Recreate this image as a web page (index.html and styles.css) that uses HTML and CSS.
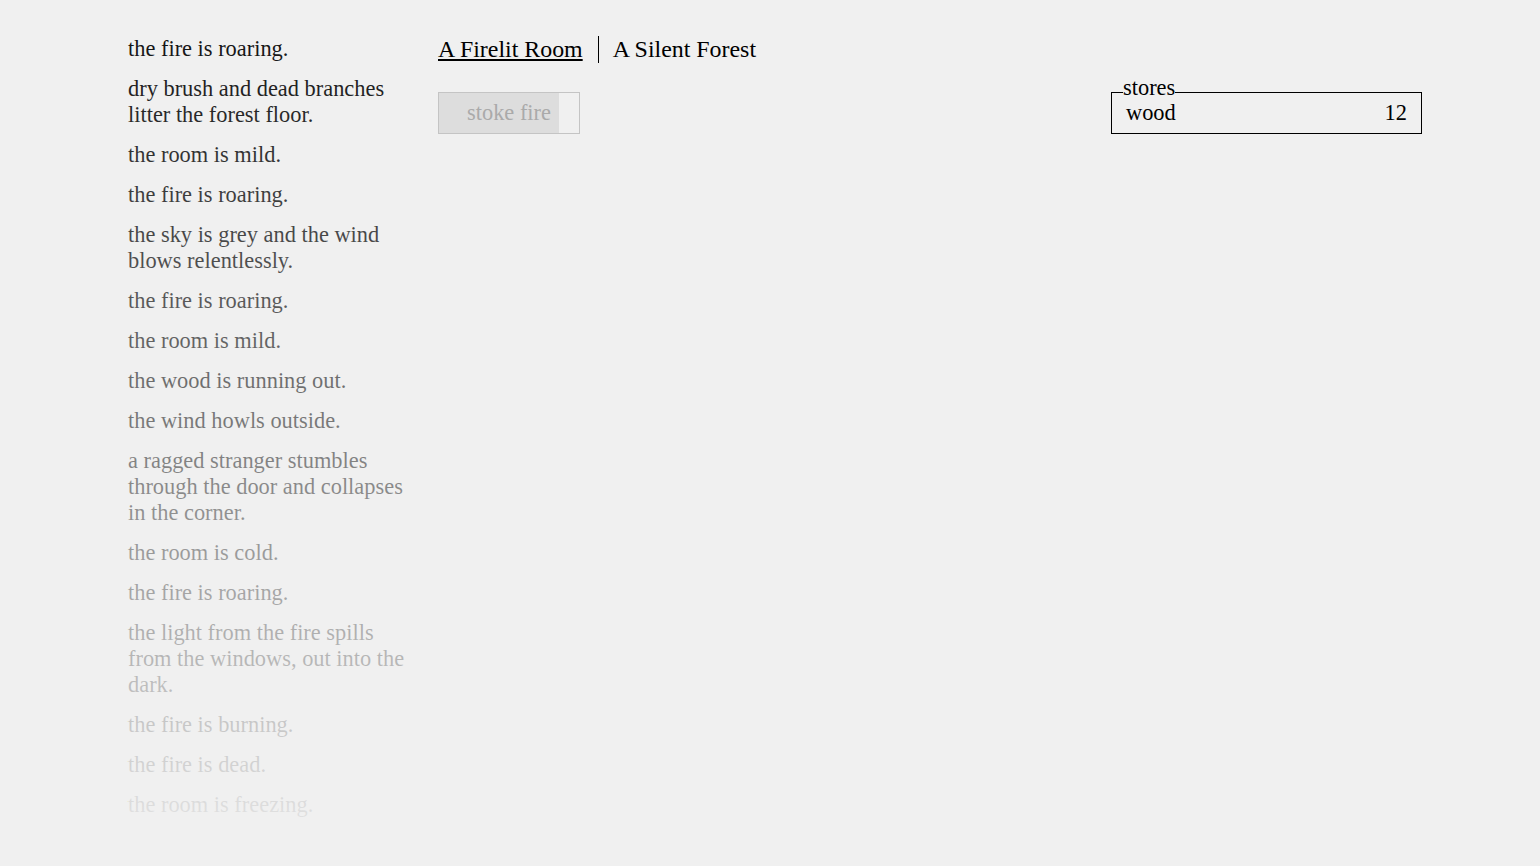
FILE: index.html
```html
<!DOCTYPE html>
<html lang="en">
<head>
    <meta charset="UTF-8">
    <title>A Dark Room</title>
    <link rel="stylesheet" href="styles.css">
</head>
<body>
    <div class="wrapper">
        <div class="notifications">
            <div class="notification">the fire is roaring.</div>
            <div class="notification">dry brush and dead branches litter the forest floor.</div>
            <div class="notification">the room is mild.</div>
            <div class="notification">the fire is roaring.</div>
            <div class="notification">the sky is grey and the wind blows relentlessly.</div>
            <div class="notification">the fire is roaring.</div>
            <div class="notification">the room is mild.</div>
            <div class="notification">the wood is running out.</div>
            <div class="notification">the wind howls outside.</div>
            <div class="notification">a ragged stranger stumbles through the door and collapses in the corner.</div>
            <div class="notification">the room is cold.</div>
            <div class="notification">the fire is roaring.</div>
            <div class="notification">the light from the fire spills from the windows, out into the dark.</div>
            <div class="notification">the fire is burning.</div>
            <div class="notification">the fire is dead.</div>
            <div class="notification">the room is freezing.</div>
            <div class="notify-gradient"></div>
        </div>

        <div class="main">
            <div class="header">
                <span class="header-button selected">A Firelit Room</span>
                <span class="header-button">A Silent Forest</span>
            </div>

            <div class="room">
                <div class="button disabled">
                    <div class="cooldown"></div>
                    <span class="button-label">stoke fire</span>
                </div>

                <div class="stores">
                    <div class="legend">stores</div>
                    <div class="store-row">
                        <span>wood</span>
                        <span>12</span>
                    </div>
                </div>
            </div>
        </div>
    </div>
</body>
</html>
```

FILE: styles.css
```css
* {
    margin: 0;
    padding: 0;
    box-sizing: border-box;
}

body {
    background-color: #f0f0f0;
    color: #000;
    font-family: "Liberation Serif", "Times New Roman", serif;
    font-size: 22.4px;
    line-height: 26px;
}

.wrapper {
    display: flex;
    padding: 36px 0 0 128px;
    width: 1422px;
    height: 866px;
}

.notifications {
    position: relative;
    width: 284px;
    margin-right: 26px;
    flex-shrink: 0;
}

.notification {
    margin-bottom: 14px;
}

.notify-gradient {
    position: absolute;
    top: 0;
    left: 0;
    right: 0;
    height: 790px;
    background: linear-gradient(to bottom, rgba(240, 240, 240, 0.08), rgba(240, 240, 240, 0.94));
}

.main {
    flex: 1;
}

.header {
    display: flex;
    padding-bottom: 29px;
    font-size: 23.9px;
    line-height: 27px;
}

.header-button {
    padding: 0 14px;
    border-left: 1px solid #000;
    cursor: pointer;
}

.header-button:first-child {
    padding: 0 15px 0 0;
    border-left: none;
}

.header-button.selected {
    text-decoration: underline;
}

.room {
    display: flex;
    justify-content: space-between;
    align-items: flex-start;
}

.button {
    position: relative;
    width: 142px;
    padding: 7px 14px;
    border: 1px solid #000;
    text-align: center;
    cursor: pointer;
}

.button.disabled {
    border-color: #c4c4c4;
    color: #aaa;
    cursor: default;
}

.cooldown {
    position: absolute;
    top: 0;
    left: 0;
    bottom: 0;
    width: 120px;
    background-color: #dddddd;
}

.button-label {
    position: relative;
}

.stores {
    position: relative;
    width: 311px;
    padding: 7px 14px;
    border: 1px solid #000;
}

.legend {
    position: absolute;
    top: -18px;
    left: 11px;
    background-color: #f0f0f0;
}

.store-row {
    display: flex;
    justify-content: space-between;
}
```
